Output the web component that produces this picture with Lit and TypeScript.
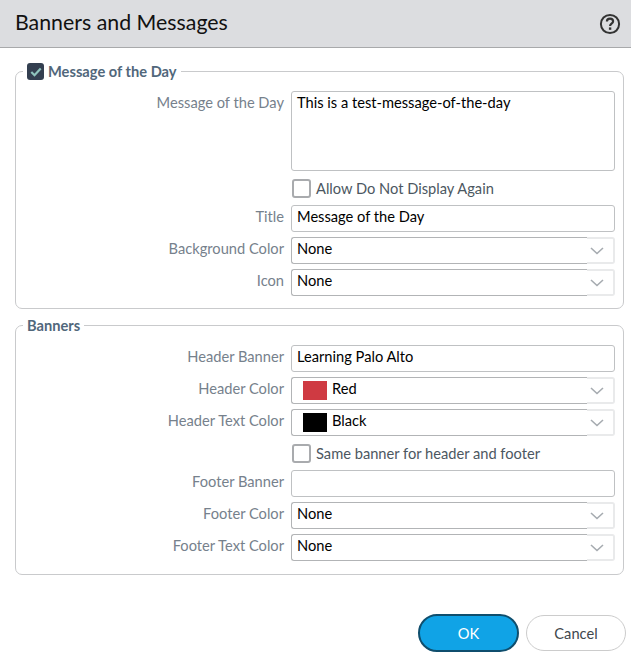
import { LitElement, css, html } from "lit";
import { customElement } from "lit/decorators.js";

@customElement("app-root")
export class AppRoot extends LitElement {
    textRow(label: string, value: string) {
        return html`
            <label class="lbl">${label}</label>
            <div class="input">${value}</div>
        `;
    }

    selectRow(label: string, value: string, swatch?: string) {
        return html`
            <label class="lbl">${label}</label>
            <div class="select">
                <div class="select-text">
                    ${swatch ? html`<span class="swatch" style="background:${swatch}"></span>` : ""}
                    ${value}
                </div>
                <div class="select-arrow">
                    <svg width="14" height="8" viewBox="0 0 14 8">
                        <path d="M1 1l6 5.5L13 1" fill="none" stroke="#a6abb0" stroke-width="1.6" />
                    </svg>
                </div>
            </div>
        `;
    }

    checkRow(label: string) {
        return html`
            <span></span>
            <div class="check-row">
                <span class="box"></span>
                <span>${label}</span>
            </div>
        `;
    }

    render() {
        return html`
            <div class="header">
                <span class="title">Banners and Messages</span>
                <svg class="help" width="22" height="22" viewBox="0 0 22 22">
                    <circle cx="11" cy="11" r="9.1" fill="none" stroke="#333" stroke-width="2" />
                    <path d="M7.9 8.6c0-2 1.4-3 3.1-3s3.1 1 3.1 2.7c0 2.4-3 2.4-3 4.6" fill="none" stroke="#333" stroke-width="2.2" />
                    <rect x="9.9" y="14.4" width="2.4" height="2.4" fill="#333" />
                </svg>
            </div>
            <div class="body">
                <fieldset class="motd">
                    <legend>
                        <span class="box checked">
                            <svg width="12" height="10" viewBox="0 0 12 10">
                                <path d="M1.3 5l3.2 3.2L10.7 1.5" fill="none" stroke="#8fc4bd" stroke-width="2.2" />
                            </svg>
                        </span>
                        Message of the Day
                    </legend>
                    <div class="grid">
                        <label class="lbl">Message of the Day</label>
                        <div class="input area">This is a test-message-of-the-day</div>
                        ${this.checkRow("Allow Do Not Display Again")}
                        ${this.textRow("Title", "Message of the Day")}
                        ${this.selectRow("Background Color", "None")}
                        ${this.selectRow("Icon", "None")}
                    </div>
                </fieldset>
                <fieldset class="banners">
                    <legend>Banners</legend>
                    <div class="grid">
                        ${this.textRow("Header Banner", "Learning Palo Alto")}
                        ${this.selectRow("Header Color", "Red", "#cf3a42")}
                        ${this.selectRow("Header Text Color", "Black", "#000")}
                        ${this.checkRow("Same banner for header and footer")}
                        ${this.textRow("Footer Banner", "")}
                        ${this.selectRow("Footer Color", "None")}
                        ${this.selectRow("Footer Text Color", "None")}
                    </div>
                </fieldset>
            </div>
            <div class="footer">
                <button class="btn ok">OK</button>
                <button class="btn cancel">Cancel</button>
            </div>
        `;
    }

    static styles = css`
        :host {
            display: block;
            width: 631px;
            height: 660px;
            overflow: hidden;
            background: #fff;
            font-family: Lato, "Open Sans", sans-serif;
            font-size: 14.67px;
            color: #000;
        }

        .header {
            height: 47px;
            box-sizing: content-box;
            display: flex;
            align-items: center;
            justify-content: space-between;
            padding: 0 10px 0 15px;
            background: #dcdde0;
            border-bottom: 1px solid #a8a9ab;
        }

        .title {
            font-size: 21.33px;
            color: #111;
            margin-bottom: 3px;
        }

        .body {
            padding: 15px 7px 0 15px;
            display: flex;
            flex-direction: column;
            gap: 8px;
        }

        fieldset {
            margin: 0;
            padding: 0 8px 0 0;
            border: 1px solid #c9cacc;
            border-radius: 7px;
            min-width: 0;
        }

        fieldset.motd {
            height: 246px;
            box-sizing: border-box;
        }

        fieldset.banners {
            height: 258px;
            box-sizing: border-box;
        }

        legend {
            display: flex;
            align-items: center;
            gap: 4px;
            margin-left: 7px;
            padding: 0 4px;
            font-weight: 700;
            color: #51677b;
        }

        .grid {
            display: grid;
            grid-template-columns: 268px 324px;
            column-gap: 7px;
            row-gap: 5px;
            padding-top: 11px;
        }

        .lbl {
            text-align: right;
            color: #76818c;
            line-height: 24px;
        }

        .input {
            box-sizing: border-box;
            height: 27px;
            padding: 0 5px;
            line-height: 22px;
            border: 1px solid #bfc1c3;
            border-radius: 3px;
            background: #fff;
            white-space: nowrap;
        }

        .input.area {
            height: 80px;
        }

        .select {
            display: flex;
            height: 27px;
        }

        .select-text {
            box-sizing: border-box;
            width: 296px;
            display: flex;
            align-items: flex-start;
            padding: 0 5px;
            line-height: 21px;
            border: 1px solid #b2b4b6;
            border-right: none;
            border-radius: 3px 0 0 3px;
        }

        .swatch {
            width: 24px;
            height: 19px;
            margin: 3px 5px 0 6px;
        }

        .select-arrow {
            box-sizing: border-box;
            flex: 1;
            display: flex;
            align-items: center;
            justify-content: center;
            padding-right: 6px;
            border: 2px solid #e9eaeb;
            border-left: none;
            border-radius: 0 3px 3px 0;
        }

        .check-row {
            display: flex;
            align-items: center;
            gap: 5px;
            height: 23px;
            margin: 1px 0 0 1px;
            color: #4c5761;
        }

        .box {
            box-sizing: border-box;
            width: 19px;
            height: 19px;
            flex: none;
            border: 2px solid #a9abae;
            border-radius: 3px;
            background: #fff;
            display: inline-flex;
            align-items: center;
            justify-content: center;
        }

        .box.checked {
            width: 17px;
            height: 17px;
            border: none;
            background: #333f50;
        }

        .footer {
            display: flex;
            justify-content: flex-end;
            gap: 7px;
            padding: 39px 5px 0 0;
        }

        .btn {
            box-sizing: border-box;
            width: 100px;
            height: 36px;
            border-radius: 18px;
            font: 14.67px Lato, sans-serif;
            padding: 0;
        }

        .ok {
            width: 101px;
            height: 38px;
            border-radius: 19px;
            background: #10a3e6;
            border: 2px solid #0f4e6d;
            color: #fff;
        }

        .cancel {
            margin-top: 1px;
            background: #fff;
            border: 1px solid #ccc;
            color: #41474d;
        }
    `;
}
